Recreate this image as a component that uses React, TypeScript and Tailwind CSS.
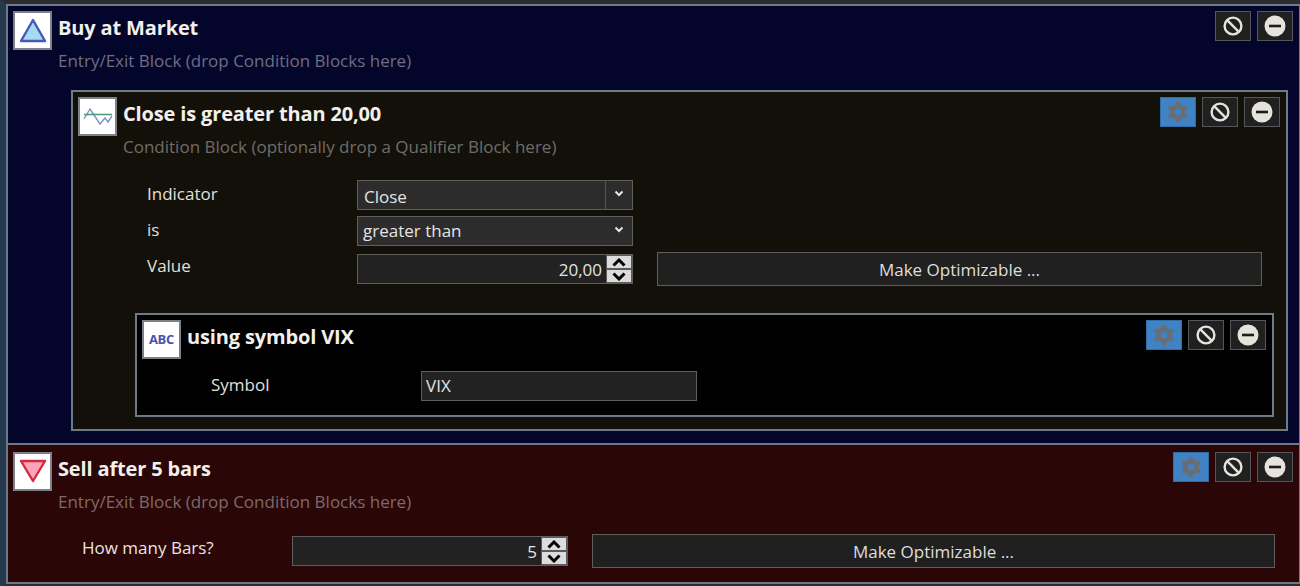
import type { ReactNode } from "react";

const font = "font-['Open_Sans','Noto_Sans',sans-serif]";

function BanIcon() {
  return (
    <svg width="22" height="22" viewBox="0 0 22 22" fill="none" stroke="#e6e3dd" strokeWidth="2.4">
      <circle cx="11" cy="11" r="8.4" />
      <line x1="5.2" y1="5.2" x2="16.8" y2="16.8" />
    </svg>
  );
}

function MinusIcon() {
  return (
    <svg width="22" height="22" viewBox="0 0 22 22">
      <circle cx="11" cy="11" r="10.5" fill="#e6e3dd" />
      <rect x="5" y="9.7" width="12" height="2.6" fill="#1c1c1c" />
    </svg>
  );
}

function GearIcon() {
  return (
    <svg width="22" height="22" viewBox="0 0 22 22" fill="none">
      <circle cx="11" cy="11" r="5.6" stroke="#6a6d73" strokeWidth="4.6" />
      {[0, 60, 120, 180, 240, 300].map((a) => (
        <rect key={a} x="8.800" y="0.800" width="4.400" height="4" fill="#6a6d73" transform={`rotate(${a} 11 11)`} />
      ))}
    </svg>
  );
}

function IconButton({ children, blue }: { children: ReactNode; blue?: boolean }) {
  return (
    <div
      className={
        blue
          ? "w-9 h-[30px] flex items-center justify-center border border-[#2f6ca8] bg-[#3f83c4]"
          : "w-9 h-[30px] flex items-center justify-center border border-[#55555c] bg-[#202020]"
      }
    >
      {children}
    </div>
  );
}

function BlockHeader({
  icon,
  title,
  subtitle,
  gear,
  tone,
}: {
  icon: ReactNode;
  title: string;
  subtitle?: string;
  gear?: boolean;
  tone: string;
}) {
  return (
    <div className="flex items-start">
      <div className="w-[39px] h-[39px] shrink-0 flex items-center justify-center bg-white border-2 border-[#7d8088]">
        {icon}
      </div>
      <div className="ml-[6px] flex-1 min-w-0">
        <div className="text-[20px] leading-[34px] h-[34px] font-bold text-[#f2f0ec] tracking-[-0.15px]">{title}</div>
        {subtitle && <div className={"text-[17px] leading-[24px] mt-[4px] " + tone}>{subtitle}</div>}
      </div>
      <div className="flex gap-[6px]">
        {gear && (
          <IconButton blue>
            <GearIcon />
          </IconButton>
        )}
        <IconButton>
          <BanIcon />
        </IconButton>
        <IconButton>
          <MinusIcon />
        </IconButton>
      </div>
    </div>
  );
}

function Chevron() {
  return (
    <svg width="10" height="7" viewBox="0 0 10 7" fill="none" stroke="#e6e6e6" strokeWidth="2">
      <path d="M1.500 1.500 5 5l3.500-3.500" />
    </svg>
  );
}

function Combo({ value, split }: { value: string; split?: boolean }) {
  return (
    <div className="w-[276px] h-[30px] flex items-center border border-[#5e5e5a] bg-[#2c2c2c] text-[#e4e4e4] text-[17px]">
      <span className={split ? "flex-1 pl-[6px] pt-[3px]" : "flex-1 pl-[5px]"}>{value}</span>
      <span className={split ? "w-[27px] h-[28px] flex items-center justify-center border-l border-[#55554f] pb-[4px]" : "w-[27px] h-[28px] flex items-center justify-center pb-[4px]"}>
        <Chevron />
      </span>
    </div>
  );
}

function SpinArrow({ down }: { down?: boolean }) {
  return (
    <div className="h-[12px] w-[24px] flex items-center justify-center bg-[#dcdcdc]">
      <svg width="14" height="9" viewBox="0 0 14 9" fill="none" stroke="#050505" strokeWidth="3">
        <path d={down ? "M1.500 1.500 7 7l5.500-5.500" : "M1.500 7.500 7 2l5.500 5.500"} />
      </svg>
    </div>
  );
}

function Spin({ value }: { value: string }) {
  return (
    <div className="w-[276px] h-[30px] flex items-center border border-[#5e5e5a] bg-[#222222] text-[#e4e4e4] text-[17px]">
      <span className="flex-1 text-right pr-[4px] pt-[1px]">{value}</span>
      <div className="w-[26px] h-[28px] flex flex-col justify-center gap-[2px] bg-[#5a5a5a] items-center">
        <SpinArrow />
        <SpinArrow down />
      </div>
    </div>
  );
}

function OptButton() {
  return (
    <div className="flex-1 h-[34px] pt-[1px] flex items-center justify-center border border-[#5e5e5a] bg-[#202020] text-[#dedede] text-[17px]">
      Make Optimizable ...
    </div>
  );
}

export default function App() {
  return (
    <div className={"w-[1300px] h-[586px] overflow-hidden bg-[#2b2d31] border-t-[4px] border-t-[#2b2d31] border-l-[6px] border-l-[#24384e] " + font}>
      {/* Buy block */}
      <div className="h-[441px] border-2 border-r border-[#6f7a88] bg-[#04052a] pt-[5px] pl-[5px] pr-[6px]">
        <BlockHeader
          title="Buy at Market"
          subtitle="Entry/Exit Block (drop Condition Blocks here)"
          tone="text-[#6d6e85]"
          icon={
            <svg width="30" height="28" viewBox="0 0 30 28">
              <path d="M15 3 27 24H3z" fill="#a4dcef" stroke="#4a56c0" strokeWidth="2.400" strokeLinejoin="round" />
            </svg>
          }
        />
        {/* Condition block */}
        <div className="mt-[17px] ml-[58px] mr-[5px] h-[341px] border-2 border-[#6f7a88] bg-[#13100a] pt-[5px] pl-[5px] pr-[6px]">
          <BlockHeader
            title="Close is greater than 20,00"
            subtitle="Condition Block (optionally drop a Qualifier Block here)"
            tone="text-[#6f6d68]"
            gear
            icon={
              <svg width="32" height="22" viewBox="0 0 32 22" fill="none">
                <path d="M2 13 8 3l6 9 4 6 5-6 3 4 4-6" stroke="#7d93cc" strokeWidth="1.400" />
                <line x1="2" y1="8.500" x2="30" y2="8.500" stroke="#4f9a78" strokeWidth="1.600" />
              </svg>
            }
          />
          <div className="mt-[21px] ml-[69px] mr-[18px] text-[17px] text-[#e0e0de]">
            <div className="flex h-[30px]">
              <span className="w-[210px] mt-[1px]">Indicator</span>
              <Combo value="Close" split />
            </div>
            <div className="flex h-[30px] mt-[6px]">
              <span className="w-[210px] mt-[1px]">is</span>
              <Combo value="greater than" />
            </div>
            <div className="flex items-start mt-[6px]">
              <span className="w-[210px] mt-[1px]">Value</span>
              <div className="mt-[2px]">
                <Spin value="20,00" />
              </div>
              <div className="ml-[24px] flex-1 flex">
                <OptButton />
              </div>
            </div>
          </div>
          {/* Qualifier block */}
          <div className="mt-[27px] ml-[57px] mr-[6px] h-[104px] border-2 border-[#6f7a88] bg-black pt-[5px] pl-[5px] pr-[6px]">
            <BlockHeader
              title="using symbol VIX"
              gear
              tone=""
              icon={<span className="text-[13px] font-bold text-[#4a52a8] tracking-[-0.3px]">ABC</span>}
            />
            <div className="flex mt-[12px] ml-[69px] text-[17px] text-[#e0e0de]">
              <span className="w-[210px] mt-[1px]">Symbol</span>
              <div className="w-[276px] h-[30px] pl-[4px] flex items-center border border-[#5e5e5a] bg-[#222222] text-[#e4e4e4]">VIX</div>
            </div>
          </div>
        </div>
      </div>
      {/* Sell block */}
      <div className="h-[139px] border-2 border-t-0 border-r border-[#6f7a88] bg-[#2b0606] pt-[7px] pl-[5px] pr-[6px]">
        <BlockHeader
          title="Sell after 5 bars"
          subtitle="Entry/Exit Block (drop Condition Blocks here)"
          tone="text-[#7f6a6a]"
          gear
          icon={
            <svg width="30" height="28" viewBox="0 0 30 28">
              <path d="M3 3h24L15 23z" fill="#fba6b8" stroke="#d8283f" strokeWidth="2.400" strokeLinejoin="round" />
            </svg>
          }
        />
        <div className="flex items-center mt-[20px] ml-[69px] mr-[18px] text-[17px] text-[#e8e4e2]">
          <span className="w-[210px] -mt-[6px]">How many Bars?</span>
          <Spin value="5" />
          <div className="ml-[24px] flex-1 flex">
            <OptButton />
          </div>
        </div>
      </div>
    </div>
  );
}
